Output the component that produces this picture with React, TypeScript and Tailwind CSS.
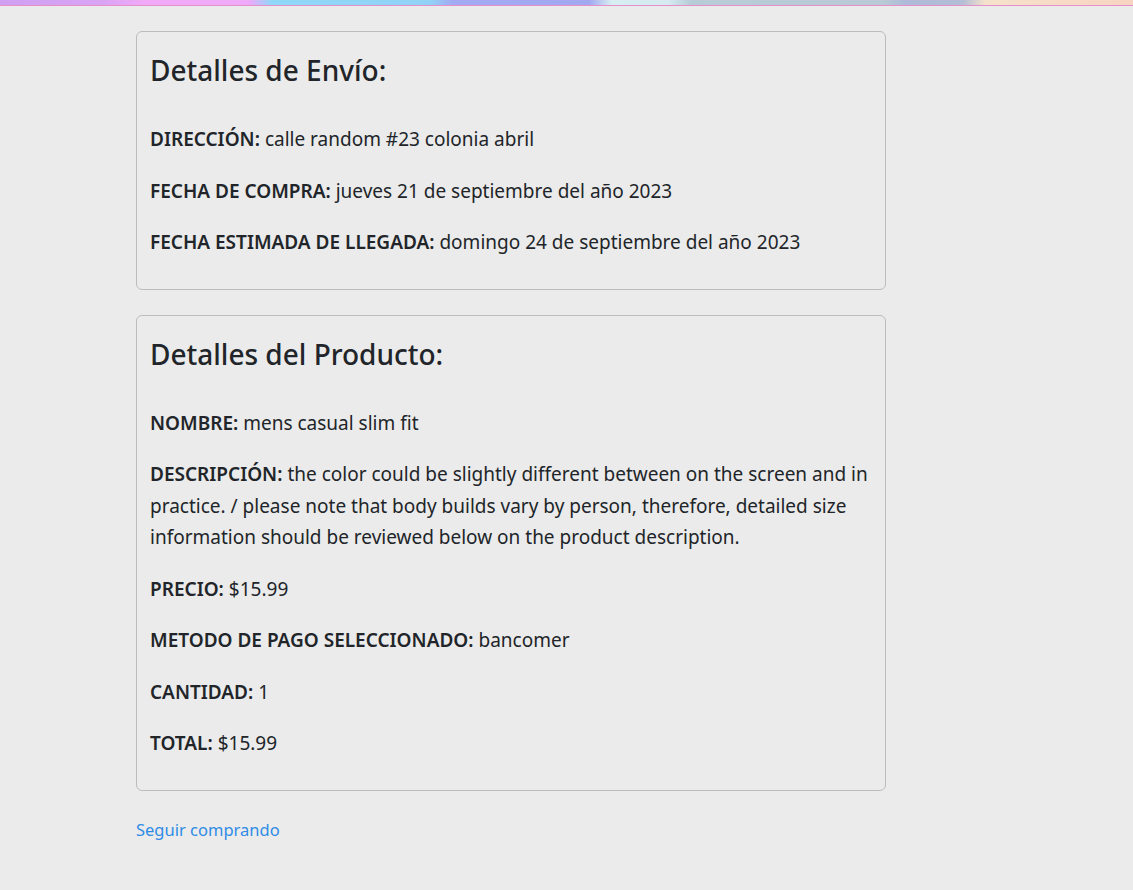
export default function App() {
	const envio = [
		{ label: "DIRECCIÓN:", value: "calle random #23 colonia abril" },
		{ label: "FECHA DE COMPRA:", value: "jueves 21 de septiembre del año 2023" },
		{ label: "FECHA ESTIMADA DE LLEGADA:", value: "domingo 24 de septiembre del año 2023" }
	];
	const producto = [
		{ label: "NOMBRE:", value: "mens casual slim fit" },
		{
			label: "DESCRIPCIÓN:",
			value: "the color could be slightly different between on the screen and in practice. / please note that body builds vary by person, therefore, detailed size information should be reviewed below on the product description."
		},
		{ label: "PRECIO:", value: "$15.99" },
		{ label: "METODO DE PAGO SELECCIONADO:", value: "bancomer" },
		{ label: "CANTIDAD:", value: "1" },
		{ label: "TOTAL:", value: "$15.99" }
	];

	return (
		<div className="min-h-[890px] bg-[#ebebeb] text-[#212529] font-['Noto_Sans',sans-serif]">
			<div className="h-[6px] border-b border-[#e58fcb] bg-[linear-gradient(90deg,#cfa0f2_0%,#d9a4f4_9%,#f2aaf8_13%,#eeaaf8_22%,#8fd8f8_24%,#92d2f6_38%,#a3a9f2_40%,#a2a8f0_52%,#d8eef2_54%,#d6eaf0_59%,#b8ccd8_61%,#bac9d6_78%,#aebad8_80%,#b4bed6_85%,#f6e2cc_87%,#f8d4c2_100%)]" />
			<div className="pl-[136px] pt-[25px]">
				<div className="w-[750px]">
					<Card title="Detalles de Envío:" rows={envio} />
					<Card title="Detalles del Producto:" rows={producto} />
					<a href="#" className="block mt-[27px] text-[16.5px] leading-[24px] text-[#2f8be6]">
						Seguir comprando
					</a>
				</div>
			</div>
		</div>
	);
}

function Card({ title, rows }: { title: string; rows: { label: string; value: string }[] }) {
	return (
		<div className="mb-[25px] rounded-[6px] border border-[#bcbcbc] px-[13px] pt-[20px] pb-[10px]">
			<h2 className="text-[28px] leading-[36px] font-medium mb-[36px]">{title}</h2>
			{rows.map((row, i) => (
				<p key={i} className="text-[19px] leading-[31.5px] mb-[20px]">
					<b className="font-semibold">{row.label}</b> {row.value}
				</p>
			))}
		</div>
	);
}
